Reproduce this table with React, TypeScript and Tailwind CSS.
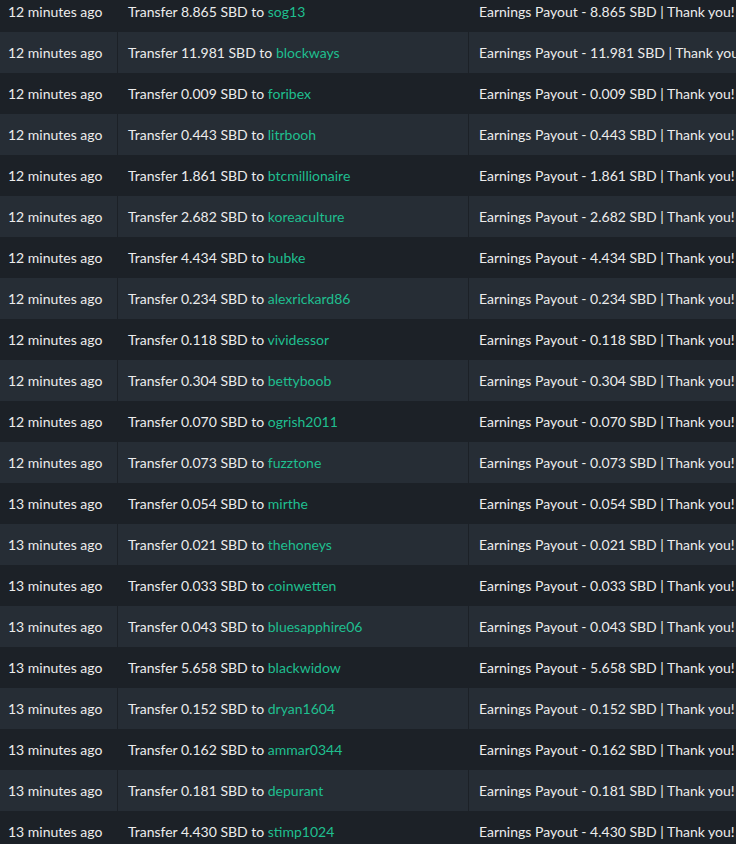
import React from "react";

const rows: [string, string, string][] = [
  ["12", "8.865", "sog13"],
  ["12", "11.981", "blockways"],
  ["12", "0.009", "foribex"],
  ["12", "0.443", "litrbooh"],
  ["12", "1.861", "btcmillionaire"],
  ["12", "2.682", "koreaculture"],
  ["12", "4.434", "bubke"],
  ["12", "0.234", "alexrickard86"],
  ["12", "0.118", "vividessor"],
  ["12", "0.304", "bettyboob"],
  ["12", "0.070", "ogrish2011"],
  ["12", "0.073", "fuzztone"],
  ["13", "0.054", "mirthe"],
  ["13", "0.021", "thehoneys"],
  ["13", "0.033", "coinwetten"],
  ["13", "0.043", "bluesapphire06"],
  ["13", "5.658", "blackwidow"],
  ["13", "0.152", "dryan1604"],
  ["13", "0.162", "ammar0344"],
  ["13", "0.181", "depurant"],
  ["13", "4.430", "stimp1024"],
];

export default function App() {
  return (
    <div
      className="w-[736px] h-[844px] overflow-hidden bg-[#1c2127] text-[#ececec] text-[14px]"
      style={{ fontFamily: "Lato, 'Open Sans', sans-serif" }}
    >
      <div className="-mt-[9px] flex flex-col">
        {rows.map(([m, amt, user], i) => (
          <div
            key={i}
            className={`flex h-[41px] items-center whitespace-nowrap ${
              i % 2 === 1 ? "bg-[#262d35]" : "bg-[#1c2127]"
            }`}
          >
            <div className="w-[117px] shrink-0 pl-2">{m} minutes ago</div>
            <div className="w-[351px] shrink-0 h-full flex items-center pl-[10px] border-l border-[#1c2127]">
              <span>
                Transfer {amt} SBD to{" "}
                <span className="text-[#1fbf8f]">{user}</span>
              </span>
            </div>
            <div className="flex-1 h-full flex items-center pl-[10px] border-l border-[#1c2127] overflow-hidden">
              Earnings Payout - {amt} SBD | Thank you!
            </div>
          </div>
        ))}
      </div>
    </div>
  );
}
